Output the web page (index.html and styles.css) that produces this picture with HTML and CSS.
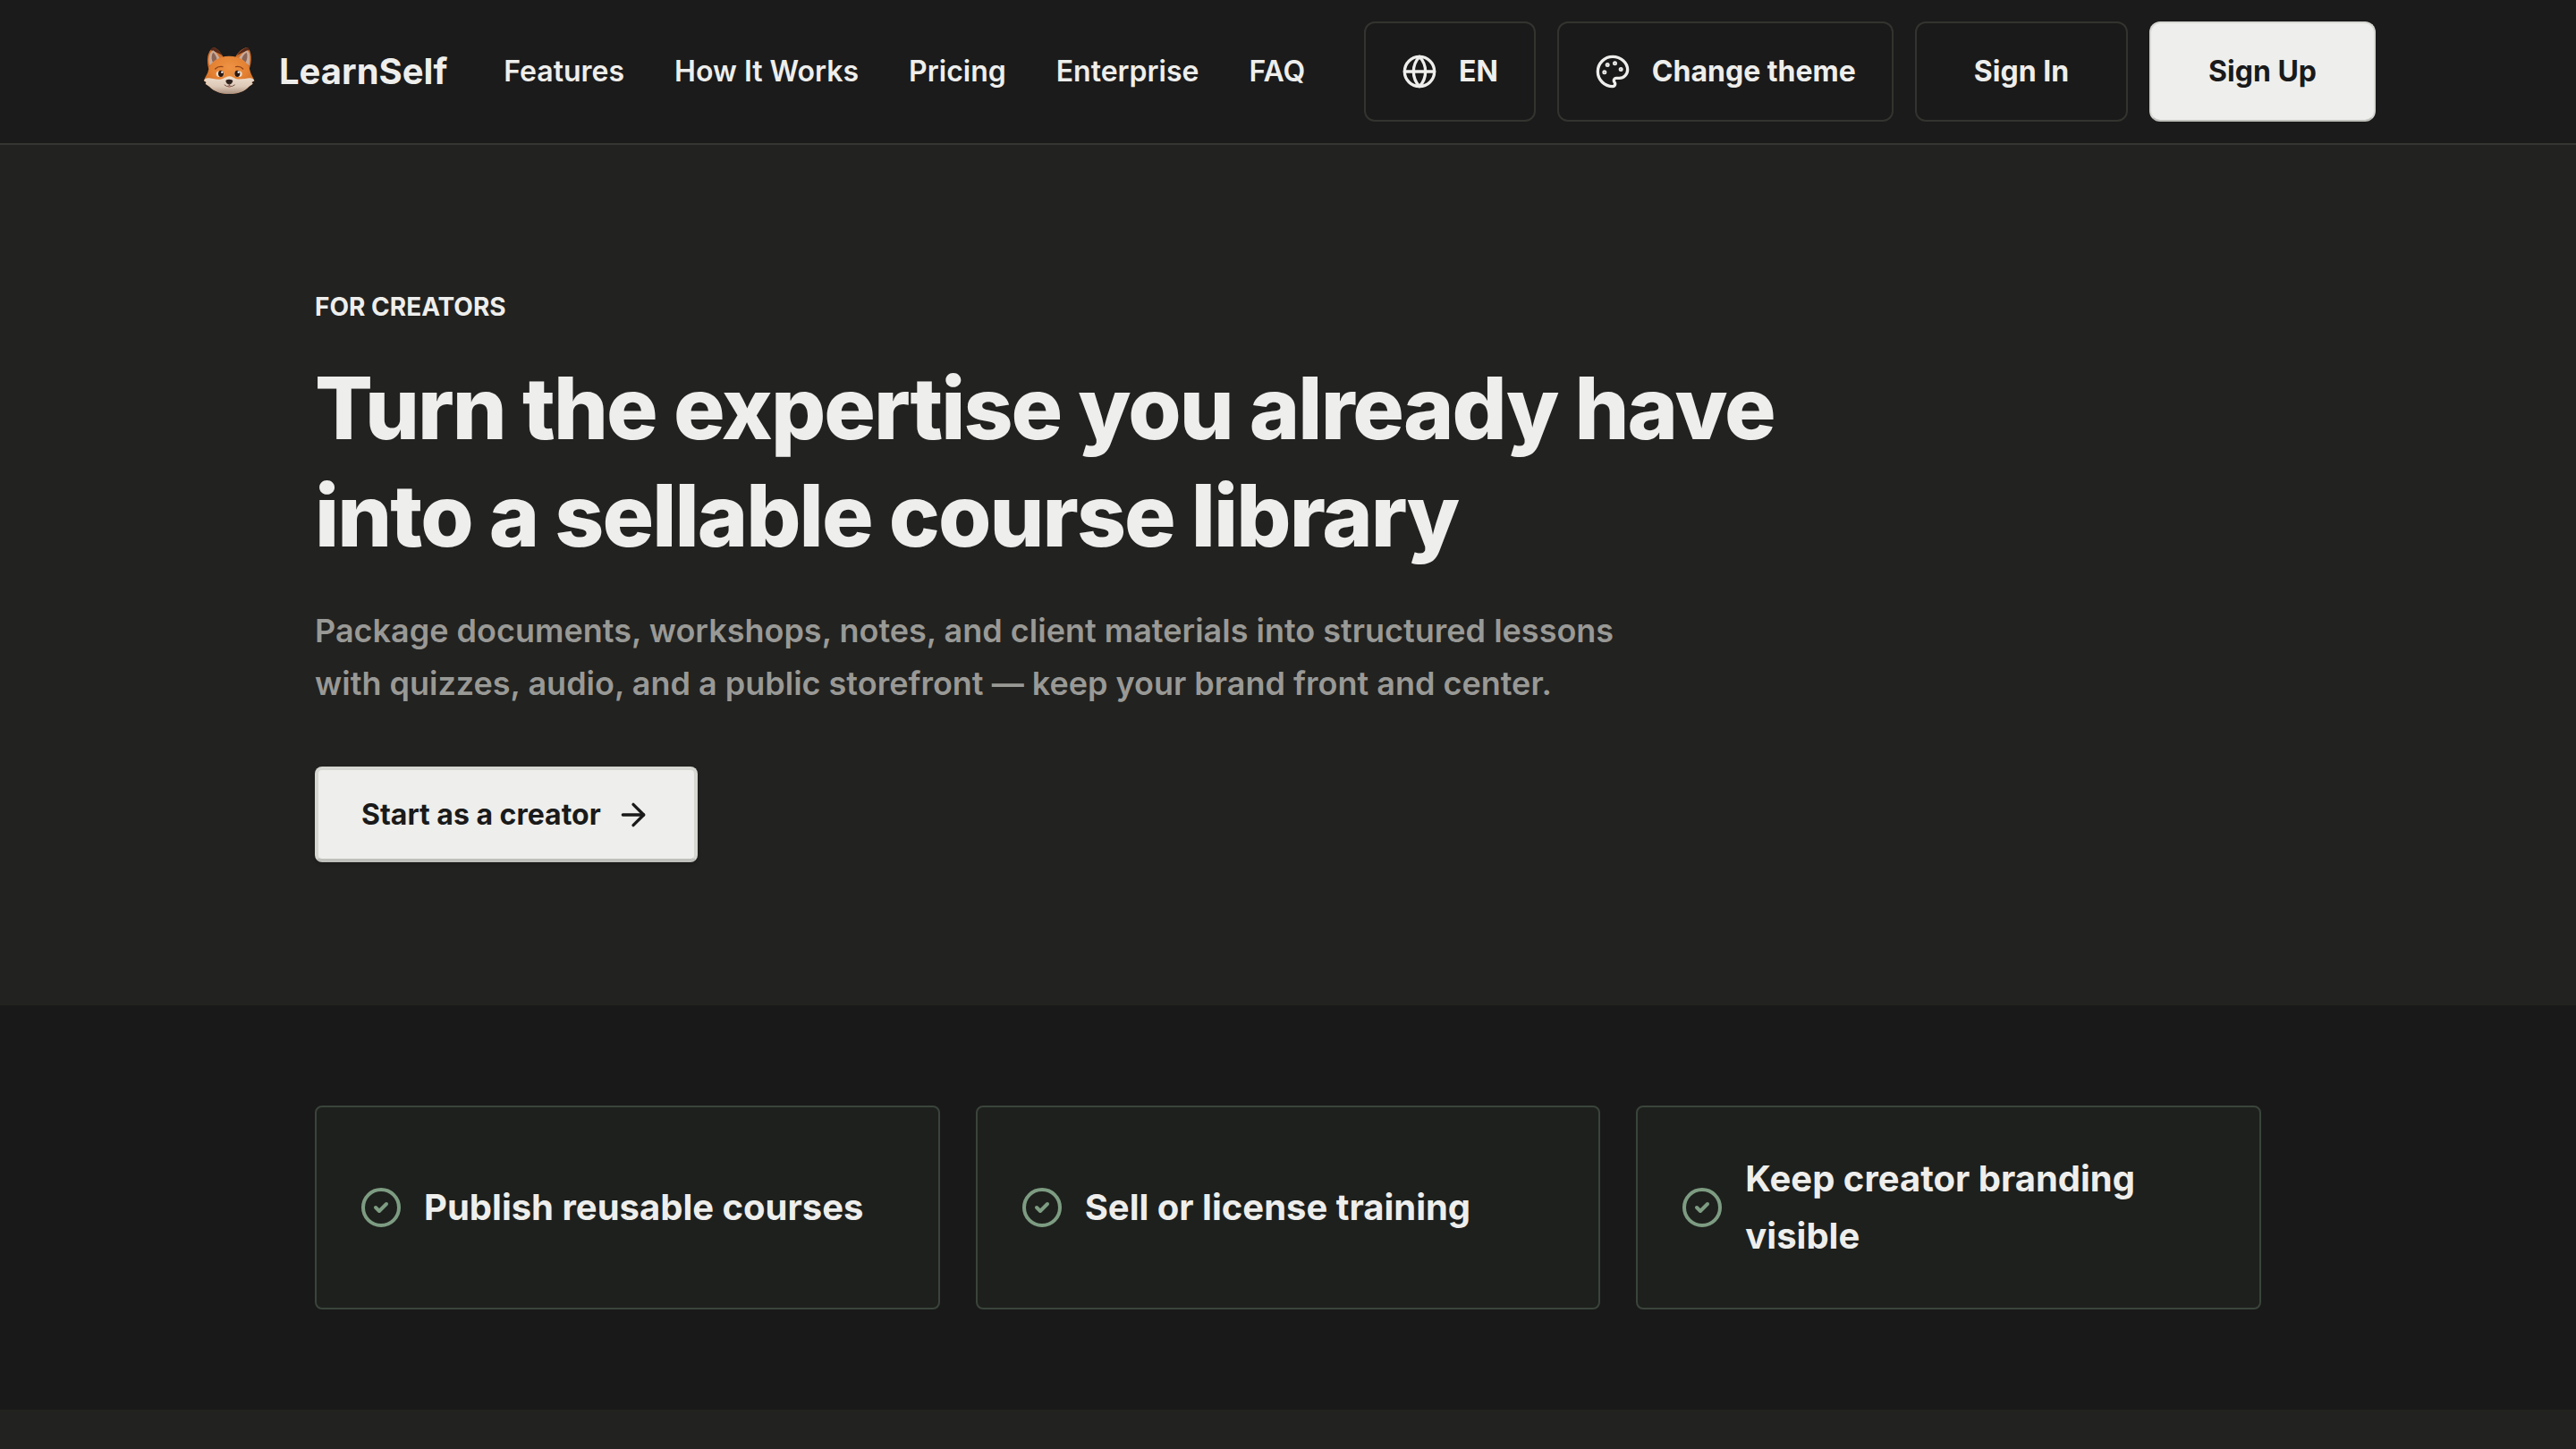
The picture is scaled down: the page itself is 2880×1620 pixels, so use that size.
FILE: index.html
```html
<!DOCTYPE html>
<html lang="en">
<head>
    <meta charset="UTF-8">
    <meta name="viewport" content="width=device-width, initial-scale=1.0">
    <title>LearnSelf - For Creators</title>
    <link rel="stylesheet" href="styles.css">
</head>
<body>
    <header class="header">
        <div class="header-inner">
            <a class="brand" href="#">
                <svg class="brand-logo" viewBox="0 0 192 192">
                    <defs>
                        <radialGradient id="fur" cx="0.5" cy="0.3" r="0.65">
                            <stop offset="0" stop-color="#ee9344"/>
                            <stop offset="0.55" stop-color="#e48132"/>
                            <stop offset="1" stop-color="#c8651f"/>
                        </radialGradient>
                        <linearGradient id="muzzle" x1="0" y1="0" x2="0" y2="1">
                            <stop offset="0" stop-color="#efe0d0"/>
                            <stop offset="0.6" stop-color="#dcc8b6"/>
                            <stop offset="1" stop-color="#a98f7e"/>
                        </linearGradient>
                    </defs>
                    <!-- ears -->
                    <path fill="#d0702c" d="M28 88C20 60 22 28 44 15C58 18 70 34 78 50Z"/>
                    <path fill="#d0702c" d="M164 88C174 60 172 28 158 15C138 18 124 34 116 50Z"/>
                    <path fill="#54281a" d="M33 23Q40 14 46 15Q62 22 74 42Q54 30 33 23Z"/>
                    <path fill="#54281a" d="M165 23Q162 14 156 15Q136 22 122 42Q144 30 165 23Z"/>
                    <path fill="#c9aa98" d="M31 76C26 52 30 32 43 25C54 32 60 42 66 53C50 58 42 66 31 76Z"/>
                    <path fill="#c9aa98" d="M163 76C168 52 166 32 157 25C142 32 134 42 128 53C144 58 152 66 163 76Z"/>
                    <path fill="#8a6456" d="M43 32C50 38 54 46 55 55L42 65C36 54 37 40 43 32Z"/>
                    <path fill="#8a6456" d="M155 32C146 38 140 46 139 55L152 65C158 54 159 40 155 32Z"/>
                    <!-- head -->
                    <path fill="url(#fur)" d="M97 44C60 44 34 64 27 91C26 101 19 110 15 118L12 127L20 132L17 137L30 146C46 163 71 171 97 171C124 171 148 163 163 146L176 137L172 132L181 127L177 117C172 109 168 100 166 91C159 64 135 44 97 44Z"/>
                    <path fill="url(#muzzle)" d="M12 127C14 116 27 116 43 120C61 124 72 123 81 117Q97 102 113 117C122 123 134 122 150 120C166 116 178 116 181 127L172 132L176 137L163 146C148 163 124 171 97 171C71 171 46 163 30 146L17 137L20 132Z"/>
                    <path fill="#e88d3e" d="M84 116C88 102 91 93 96 93C102 93 106 104 111 116Q97 108 84 116Z"/>
                    <!-- eyes -->
                    <path d="M50 87Q60 77 75 80M119 80Q134 77 143 87" fill="none" stroke="#8f4318" stroke-width="4" stroke-linecap="round"/>
                    <ellipse cx="66" cy="104" rx="13" ry="10" fill="#f0dcc8"/>
                    <ellipse cx="127" cy="104" rx="13" ry="10" fill="#f0dcc8"/>
                    <ellipse cx="69" cy="103" rx="9" ry="11" fill="#2a1710"/>
                    <ellipse cx="124" cy="103" rx="9" ry="11" fill="#2a1710"/>
                    <circle cx="73" cy="98" r="3.5" fill="#fff"/>
                    <circle cx="128" cy="98" r="3.5" fill="#fff"/>
                    <!-- nose and mouth -->
                    <path fill="#2d211e" d="M85 128Q86 122 97 122Q108 122 109 128Q105 139 97 139Q89 139 85 128Z"/>
                    <path d="M97 138V143M81 141Q89 149 97 144Q106 149 115 141" fill="none" stroke="#705044" stroke-width="3" stroke-linecap="round"/>
                    <path fill="#a3483c" d="M90 145Q97 150 105 145Q97 153 90 145Z"/>
                </svg>
                <span class="brand-name">LearnSelf</span>
            </a>
            <nav class="nav">
                <a href="#">Features</a>
                <a href="#">How It Works</a>
                <a href="#">Pricing</a>
                <a href="#">Enterprise</a>
                <a href="#">FAQ</a>
            </nav>
            <div class="actions">
                <button class="btn">
                    <svg class="icon" viewBox="0 0 24 24">
                        <circle cx="12" cy="12" r="10"/>
                        <path d="M12 2a14.5 14.5 0 0 0 0 20 14.5 14.5 0 0 0 0-20"/>
                        <path d="M2 12h20"/>
                    </svg>
                    EN
                </button>
                <button class="btn">
                    <svg class="icon" viewBox="0 0 24 24">
                        <circle class="dot" cx="13.5" cy="6.5" r=".5"/>
                        <circle class="dot" cx="17.5" cy="10.5" r=".5"/>
                        <circle class="dot" cx="8.5" cy="7.5" r=".5"/>
                        <circle class="dot" cx="6.5" cy="12.5" r=".5"/>
                        <path d="M12 2C6.5 2 2 6.5 2 12s4.5 10 10 10c.926 0 1.648-.746 1.648-1.688 0-.437-.18-.835-.437-1.125-.29-.289-.438-.652-.438-1.125a1.64 1.64 0 0 1 1.668-1.668h1.996c3.051 0 5.555-2.503 5.555-5.554C21.965 6.012 17.461 2 12 2z"/>
                    </svg>
                    Change theme
                </button>
                <button class="btn btn-wide">Sign In</button>
                <button class="btn btn-wide btn-light">Sign Up</button>
            </div>
        </div>
    </header>

    <section class="hero">
        <div class="container">
            <p class="eyebrow">FOR CREATORS</p>
            <h1>Turn the expertise you already have into a sellable course library</h1>
            <p class="lead">Package documents, workshops, notes, and client materials into structured lessons with quizzes, audio, and a public storefront — keep your brand front and center.</p>
            <a class="cta" href="#">
                Start as a creator
                <svg class="icon" viewBox="0 0 24 24">
                    <path d="M5 12h14"/>
                    <path d="m12 5 7 7-7 7"/>
                </svg>
            </a>
        </div>
    </section>

    <section class="benefits">
        <div class="container cards">
            <div class="card">
                <svg class="icon check" viewBox="0 0 24 24"><circle cx="12" cy="12" r="10"/><path d="m9 12 2 2 4-4"/></svg>
                <p>Publish reusable courses</p>
            </div>
            <div class="card">
                <svg class="icon check" viewBox="0 0 24 24"><circle cx="12" cy="12" r="10"/><path d="m9 12 2 2 4-4"/></svg>
                <p>Sell or license training</p>
            </div>
            <div class="card">
                <svg class="icon check" viewBox="0 0 24 24"><circle cx="12" cy="12" r="10"/><path d="m9 12 2 2 4-4"/></svg>
                <p>Keep creator branding visible</p>
            </div>
        </div>
    </section>
</body>
</html>
```
FILE: styles.css
```css
* {
    box-sizing: border-box;
    margin: 0;
    padding: 0;
}
body {
    background: #222220;
    color: #eeeeec;
    font-family: Inter, "Liberation Sans", sans-serif;
    font-size: 32px;
    line-height: 1.6;
    height: 100vh;
    overflow: hidden;
}
a {
    color: inherit;
    text-decoration: none;
}
.icon {
    width: 40px;
    height: 40px;
    flex-shrink: 0;
    fill: none;
    stroke: currentColor;
    stroke-width: 2;
    stroke-linecap: round;
    stroke-linejoin: round;
}
.icon .dot {
    fill: currentColor;
}
.header {
    background: #1b1b1b;
    border-bottom: 2px solid #353532;
}
.header-inner {
    display: flex;
    align-items: center;
    height: 160px;
    padding: 0 224px;
}
.brand {
    display: flex;
    align-items: center;
    gap: 24px;
}
.brand-logo {
    width: 64px;
    height: 64px;
}
.brand-name {
    font-size: 40px;
    font-weight: 700;
}
.nav {
    display: flex;
    gap: 56px;
    margin-left: 63px;
    font-weight: 600;
}
.actions {
    display: flex;
    gap: 24px;
    margin-left: auto;
}
.btn {
    display: flex;
    align-items: center;
    gap: 24px;
    height: 112px;
    padding: 0 40px;
    background: #1a1a1a;
    border: 2px solid #33332f;
    border-radius: 12px;
    color: #eeeeec;
    font: inherit;
    font-weight: 700;
    cursor: pointer;
}
.btn-wide {
    padding: 0 64px;
}
.btn-light {
    background: #eeeeec;
    border-color: #d6d7d2;
    border-bottom-color: #bfc0bb;
    color: #1a1a1a;
}
.container {
    width: 2176px;
    margin: 0 auto;
}
.hero {
    padding: 160px 0;
}
.eyebrow {
    font-size: 28px;
    font-weight: 700;
    line-height: 42px;
    margin-bottom: 32px;
}
h1 {
    max-width: 1792px;
    font-size: 96px;
    font-weight: 800;
    line-height: 1.25;
    letter-spacing: -0.02em;
    margin-bottom: 40px;
}
.lead {
    max-width: 1500px;
    color: #999996;
    font-size: 36px;
    font-weight: 600;
    line-height: 1.625;
    margin-bottom: 64px;
}
.cta {
    display: flex;
    align-items: center;
    gap: 16px;
    width: fit-content;
    padding: 24px 48px;
    background: #eeeeec;
    border: 4px solid #d6d7d2;
    border-bottom-color: #bfc0bb;
    border-radius: 8px;
    box-shadow: 0 2px 4px rgba(0, 0, 0, 0.2);
    color: #1a1a1a;
    font-weight: 700;
}
.benefits {
    background: #191919;
    padding: 112px 0;
}
.cards {
    display: grid;
    grid-template-columns: repeat(3, 1fr);
    gap: 40px;
}
.card {
    display: flex;
    align-items: center;
    gap: 24px;
    padding: 48px;
    background: #1e201d;
    border: 2px solid #3a443b;
    border-radius: 8px;
    font-size: 40px;
    font-weight: 700;
}
.check {
    width: 48px;
    height: 48px;
    color: #7d9c82;
}
```
